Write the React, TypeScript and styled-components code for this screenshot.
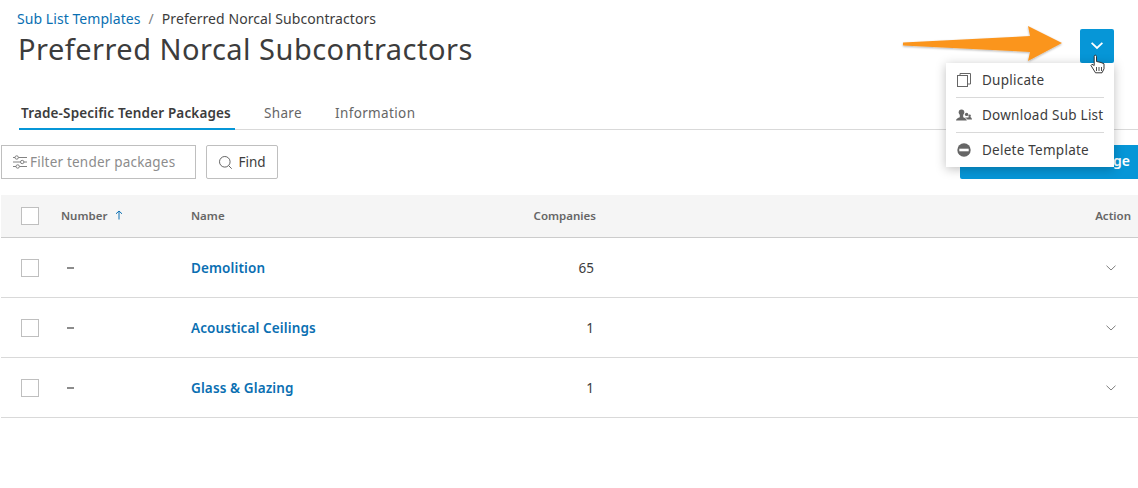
import React from "react";
import styled, { createGlobalStyle } from "styled-components";

const Global = createGlobalStyle`
  html, body { margin: 0; padding: 0; background: #fff; }
  body { font-family: "Noto Sans", "Open Sans", sans-serif; color: #3c3c3c; overflow: hidden; }
  #root { width: 1138px; height: 488px; }
`;

const Page = styled.div`
  position: relative;
  width: 1138px;
  height: 488px;
  overflow: hidden;
  padding-left: 1px;
  box-sizing: border-box;
`;
const Header = styled.header`
  display: flex;
  justify-content: space-between;
  padding: 10px 24px 0 16px;
  height: 97px;
  box-sizing: border-box;
`;
const Crumbs = styled.div`
  display: flex;
  gap: 8px;
  font-size: 14px;
  line-height: 18px;
  letter-spacing: 0.06px;
`;
const CrumbLink = styled.a`color: #0a6fb2;`;
const CrumbSep = styled.span`color: #808080;`;
const Title = styled.h1`
  margin: 1px 0 0 1px;
  font-size: 29px;
  line-height: 40px;
  font-weight: 400;
  letter-spacing: 0.48px;
  color: #3c3c3c;
`;
const MenuButton = styled.button`
  width: 34px;
  height: 34px;
  margin-top: 19px;
  padding: 0;
  border: 0;
  border-radius: 2px;
  background: #0696d7;
  display: flex;
  align-items: center;
  justify-content: center;
`;
const Tabs = styled.nav`
  display: flex;
  gap: 29px;
  margin: 0 0 0 18px;
  height: 33px;
  border-bottom: 1px solid #d9d9d9;
  box-sizing: border-box;
`;
const Tab = styled.div<{ $active?: boolean }>`
  padding: 7px 4px 0 ${(p) => (p.$active ? "2px" : "0")};
  height: 33px;
  box-sizing: border-box;
  font-size: 13.5px;
  line-height: 18px;
  letter-spacing: ${(p) => (p.$active ? "0.15px" : "0.36px")};
  font-weight: ${(p) => (p.$active ? 600 : 400)};
  color: ${(p) => (p.$active ? "#3c3c3c" : "#666")};
  border-bottom: ${(p) => (p.$active ? "2px solid #0696d7" : "0")};
`;
const Toolbar = styled.div`
  display: flex;
  justify-content: space-between;
  align-items: center;
  height: 34px;
  margin-top: 15px;
`;
const ToolLeft = styled.div`
  display: flex;
  gap: 10px;
`;
const FilterBox = styled.div`
  width: 195px;
  height: 34px;
  box-sizing: border-box;
  border: 1px solid #bfbfbf;
  display: flex;
  align-items: center;
  gap: 2px;
  padding: 0 0 0 10px;
  font-size: 13.5px;
  letter-spacing: 0.2px;
  color: #8c8c8c;
`;
const FindButton = styled.button`
  width: 72px;
  height: 34px;
  box-sizing: border-box;
  border: 1px solid #bfbfbf;
  border-radius: 2px;
  background: #fff;
  display: flex;
  align-items: center;
  justify-content: center;
  gap: 5px;
  font: 400 13.5px "Noto Sans", sans-serif;
  color: #3c3c3c;
`;
const PrimaryButton = styled.button`
  width: 178px;
  height: 34px;
  border: 0;
  border-radius: 2px 0 0 2px;
  padding: 0 8px 3px 0;
  text-align: right;
  white-space: nowrap;
  background: #0696d7;
  color: #fff;
  font: 600 14px "Noto Sans", sans-serif;
`;
const COLS = "60px 130px 290px 115px 1fr";
const HeadRow = styled.div`
  display: grid;
  grid-template-columns: ${COLS};
  align-items: center;
  height: 43px;
  margin-top: 16px;
  padding-bottom: 2px;
  box-sizing: border-box;
  background: #f5f5f5;
  border-bottom: 1px solid #cccccc;
  font-size: 11.5px;
  font-weight: 600;
  color: #666;
`;
const Row = styled.div`
  display: grid;
  grid-template-columns: ${COLS};
  align-items: center;
  height: 60px;
  box-sizing: border-box;
  border-bottom: 1px solid #d9d9d9;
  font-size: 13.5px;
`;
const CheckCell = styled.div`
  padding-left: 20px;
  display: flex;
`;
const HeadCheckCell = styled(CheckCell)`
  margin-top: 2px;
`;
const Check = styled.span`
  width: 18px;
  height: 18px;
  box-sizing: border-box;
  border: 1px solid #bfbfbf;
  background: #fff;
`;
const NumberHead = styled.div`
  display: flex;
  align-items: center;
  gap: 8px;
`;
const Dash = styled.span`
  width: 7px;
  height: 2px;
  margin-left: 6px;
  background: #8c8c8c;
  display: block;
`;
const NameLink = styled.a`
  color: #0a6fb2;
  font-weight: 600;
  font-size: 13.5px;
  letter-spacing: 0.12px;
`;
const CompaniesHead = styled.div`text-align: right;`;
const Count = styled.div`
  text-align: right;
  padding-right: 2px;
  color: #3c3c3c;
`;
const RightCell = styled.div<{ $pad: number }>`
  display: flex;
  justify-content: flex-end;
  padding-right: ${(p) => p.$pad}px;
`;
const Menu = styled.div`
  position: absolute;
  left: 946px;
  top: 63px;
  width: 168px;
  height: 104px;
  background: #fff;
  box-shadow: 0 2px 10px rgba(0, 0, 0, 0.25);
  padding: 0 10px;
  box-sizing: border-box;
  display: flex;
  flex-direction: column;
`;
const MenuItem = styled.div`
  flex: 1;
  display: flex;
  align-items: center;
  gap: 10px;
  font-size: 13.5px;
  letter-spacing: 0.25px;
  white-space: nowrap;
  color: #3c3c3c;
  & + & { border-top: 1px solid #d9d9d9; }
`;
const IconSlot = styled.span`
  width: 16px;
  height: 16px;
  display: flex;
`;
const ArrowSvg = styled.svg`
  position: absolute;
  left: 900px;
  top: 20px;
  pointer-events: none;
`;
const CursorSvg = styled.svg`
  position: absolute;
  left: 1090px;
  top: 54px;
  pointer-events: none;
`;

const Chevron = ({ color, w = 10 }: { color: string; w?: number }) => (
  <svg width={w} height={w * 0.6} viewBox="0 0 10 6" fill="none">
    <path d="M.5.7 5 5 9.5.7" stroke={color} strokeWidth={w > 10 ? 1.5 : 1} />
  </svg>
);

const rows = [
  { name: "Demolition", count: 65 },
  { name: "Acoustical Ceilings", count: 1 },
  { name: "Glass & Glazing", count: 1 },
];

export default function App() {
  return (
    <Page>
      <Global />
      <Header>
        <div>
          <Crumbs>
            <CrumbLink>Sub List Templates</CrumbLink>
            <CrumbSep>/</CrumbSep>
            <span>Preferred Norcal Subcontractors</span>
          </Crumbs>
          <Title>Preferred Norcal Subcontractors</Title>
        </div>
        <MenuButton aria-label="More">
          <Chevron color="#fff" w={12} />
        </MenuButton>
      </Header>
      <Tabs>
        <Tab $active>Trade-Specific Tender Packages</Tab>
        <Tab>Share</Tab>
        <Tab>Information</Tab>
      </Tabs>
      <Toolbar>
        <ToolLeft>
          <FilterBox>
            <svg width="16" height="16" viewBox="0 0 16 16" fill="none" stroke="#757575" strokeWidth="0.9">
              <path d="M1 3.5h2M6.5 3.5H15M1 8h7.5M12 8h3M1 12.5h3M7.5 12.5H15" />
              <circle cx="4.7" cy="3.5" r="1.7" />
              <circle cx="10.2" cy="8" r="1.7" />
              <circle cx="5.7" cy="12.5" r="1.7" />
            </svg>
            Filter tender packages
          </FilterBox>
          <FindButton>
            <svg width="15" height="15" viewBox="0 0 15 15" fill="none" stroke="#666" strokeWidth="1">
              <circle cx="6.8" cy="6.8" r="5.3" />
              <path d="m10.7 10.7 3 3" />
            </svg>
            Find
          </FindButton>
        </ToolLeft>
        <PrimaryButton>Add Tender Package</PrimaryButton>
      </Toolbar>
      <HeadRow>
        <HeadCheckCell><Check /></HeadCheckCell>
        <NumberHead>
          Number
          <svg width="8" height="10" viewBox="0 0 8 10" fill="none" stroke="#0a6fb2" strokeWidth="1">
            <path d="M4 9.5V1M1 3.8 4 1l3 2.8" />
          </svg>
        </NumberHead>
        <div>Name</div>
        <CompaniesHead>Companies</CompaniesHead>
        <RightCell $pad={7}>Action</RightCell>
      </HeadRow>
      {rows.map((r) => (
        <Row key={r.name}>
          <CheckCell><Check /></CheckCell>
          <div><Dash /></div>
          <NameLink>{r.name}</NameLink>
          <Count>{r.count}</Count>
          <RightCell $pad={22}><Chevron color="#808080" /></RightCell>
        </Row>
      ))}
      <Menu>
        <MenuItem>
          <IconSlot>
            <svg width="16" height="16" viewBox="0 0 16 16" fill="none" stroke="#666" strokeWidth="1">
              <rect x="1.5" y="3.5" width="10" height="11" />
              <path d="M4 3.5V1.5h10.5v10.5h-3" />
            </svg>
          </IconSlot>
          Duplicate
        </MenuItem>
        <MenuItem>
          <IconSlot>
            <svg width="16" height="16" viewBox="0 0 16 16" fill="#666">
              <circle cx="5.5" cy="5.2" r="2.8" />
              <path d="M0 13.5c.2-2 2-2.6 3.8-3.3V7h3.4v3.2c1.8.7 3.3 1.3 3.6 3.3z" />
              <circle cx="10.6" cy="7.4" r="1.7" />
              <circle cx="13.6" cy="8.8" r="1.3" />
              <path d="M9 10.4h3.2l.6-.4h1.6c.9.5 1.5 1.2 1.6 2.6h-4.6c-.4-1-1.4-1.7-2.4-2.2z" />
            </svg>
          </IconSlot>
          Download Sub List
        </MenuItem>
        <MenuItem>
          <IconSlot>
            <svg width="16" height="16" viewBox="0 0 16 16">
              <circle cx="8" cy="8" r="6.7" fill="#666" />
              <rect x="3.3" y="6.7" width="9.4" height="2.6" fill="#fff" />
            </svg>
          </IconSlot>
          Delete Template
        </MenuItem>
      </Menu>
      <ArrowSvg width="170" height="50" viewBox="0 0 170 50">
        <defs>
          <filter id="arrowShadow" x="-5%" y="-20%" width="110%" height="150%">
            <feDropShadow dx="0" dy="1" stdDeviation="1" floodColor="#000" floodOpacity="0.3" />
          </filter>
        </defs>
        <path d="M3 22.5 130 16 128 6 162 23 128 41 130 32 3 25.5Z" fill="#fb951f" filter="url(#arrowShadow)" />
      </ArrowSvg>
      <CursorSvg width="16" height="21" viewBox="0 0 16 21">
        <path d="M4.5 1.5c1-.8 2 0 2 1v5l4.5 1 3 1.3v5l-2 4H5.5L1 11.5l1-1.2 2.2 1.2V2.5z" fill="#fff" stroke="#222" strokeWidth="0.9" />
        <path d="M6.5 13v4M9 13v4M11.5 13v4" stroke="#222" strokeWidth="0.8" />
      </CursorSvg>
    </Page>
  );
}
